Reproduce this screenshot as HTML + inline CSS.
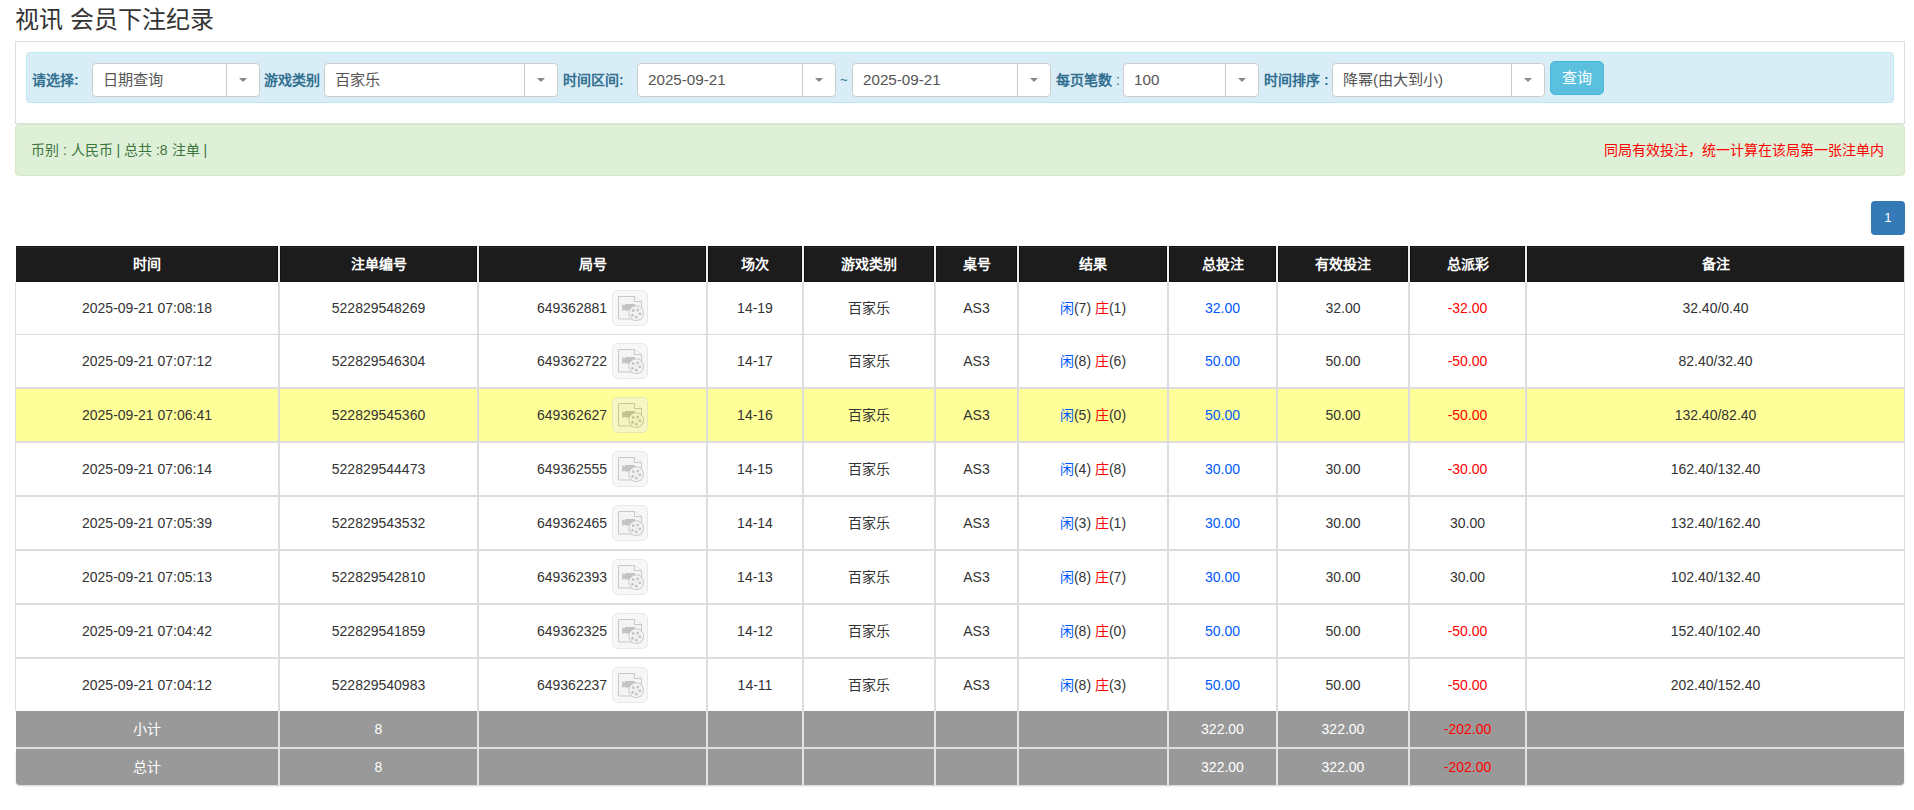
<!DOCTYPE html><html lang="zh-CN"><head><meta charset="utf-8"><style>
*{box-sizing:border-box;margin:0;padding:0}
html,body{width:1914px;height:810px;overflow:hidden;background:#fff}
body{font-family:"Liberation Sans", sans-serif;color:#333;position:relative}
.a{position:absolute;white-space:nowrap}
.t{font-size:14px;line-height:16px;text-align:center}
.sel{position:absolute;top:63px;height:34px;background:#fff;border:1px solid #cdcdcd;border-radius:4px}
.sel .dv{position:absolute;top:0;bottom:0;width:1px;background:#c9c9c9}
.sel .ar{position:absolute;top:14px;width:0;height:0;border-left:4px solid transparent;border-right:4px solid transparent;border-top:4px solid #888}
.sel .tx{position:absolute;left:10px;top:7px;font-size:15.2px;line-height:17px;color:#555;white-space:nowrap}
.lb{position:absolute;top:72px;font-size:14px;line-height:17px;font-weight:bold;color:#31708f;white-space:nowrap}
.vl{position:absolute;width:2px;background:#ddd}
.hl{position:absolute;height:2px;background:#ddd}

</style></head><body>
<div class="a" style="left:15px;top:5px;font-size:24px;line-height:30px;color:#333">视讯 会员下注纪录</div>
<div class="a" style="left:15px;top:41px;width:1890px;height:83px;border:1px solid #ddd;border-bottom-color:#ddd"></div>
<div class="a" style="left:26px;top:52px;width:1868px;height:51px;background:#d9edf7;border:1px solid #bce8f1;border-radius:4px"></div>
<div class="lb" style="left:32px">请选择:</div>
<div class="sel" style="left:92px;width:168px"><div class="tx">日期查询</div><div class="dv" style="left:133px"></div><div class="ar" style="left:146px"></div></div>
<div class="lb" style="left:264px">游戏类别</div>
<div class="sel" style="left:324px;width:234px"><div class="tx">百家乐</div><div class="dv" style="left:199px"></div><div class="ar" style="left:212px"></div></div>
<div class="lb" style="left:563px">时间区间:</div>
<div class="sel" style="left:637px;width:199px"><div class="tx">2025-09-21</div><div class="dv" style="left:164px"></div><div class="ar" style="left:177px"></div></div>
<div class="a" style="left:840px;top:71px;font-size:13.2px;line-height:17px;color:#31708f">~</div>
<div class="sel" style="left:852px;width:199px"><div class="tx">2025-09-21</div><div class="dv" style="left:164px"></div><div class="ar" style="left:177px"></div></div>
<div class="lb" style="left:1056px">每页笔数 <span style="font-weight:normal">:</span></div>
<div class="sel" style="left:1123px;width:136px"><div class="tx">100</div><div class="dv" style="left:101px"></div><div class="ar" style="left:114px"></div></div>
<div class="lb" style="left:1264px">时间排序 :</div>
<div class="sel" style="left:1332px;width:213px"><div class="tx">降幂(由大到小)</div><div class="dv" style="left:178px"></div><div class="ar" style="left:191px"></div></div>
<div class="a" style="left:1550px;top:61px;width:54px;height:34px;background:#5bc0de;border:1px solid #46b8da;border-radius:5px;color:#fff;font-size:15px;line-height:32px;text-align:center">查询</div>
<div class="a" style="left:15px;top:124px;width:1890px;height:52px;background:#dff0d8;border:1px solid #d6e9c6;border-radius:4px"></div>
<div class="a" style="left:31px;top:142px;font-size:14px;line-height:16px;color:#3c763d">币别 : 人民币 | 总共 :8 注单 |</div>
<div class="a" style="right:30px;top:142px;font-size:14px;line-height:16px;color:#f00">同局有效投注，统一计算在该局第一张注单内</div>
<div class="a" style="left:1871px;top:201px;width:34px;height:34px;background:#337ab7;border-radius:4px;color:#fff;font-size:13.2px;line-height:34px;text-align:center">1</div>
<div class="a" style="left:16px;top:246px;width:1888px;height:36px;background:#1c1c1c;border-top:1px solid #141414"></div>
<div class="a" style="left:16px;top:247px;width:1888px;height:1px;background:#282828"></div>
<div class="a" style="left:16px;top:281px;width:1888px;height:1px;background:#141414"></div>
<div class="a t" style="left:16px;width:262px;top:256px;color:#fff;font-weight:bold">时间</div>
<div class="a t" style="left:280px;width:197px;top:256px;color:#fff;font-weight:bold">注单编号</div>
<div class="a t" style="left:479px;width:227px;top:256px;color:#fff;font-weight:bold">局号</div>
<div class="a t" style="left:708px;width:94px;top:256px;color:#fff;font-weight:bold">场次</div>
<div class="a t" style="left:804px;width:130px;top:256px;color:#fff;font-weight:bold">游戏类别</div>
<div class="a t" style="left:936px;width:81px;top:256px;color:#fff;font-weight:bold">桌号</div>
<div class="a t" style="left:1019px;width:148px;top:256px;color:#fff;font-weight:bold">结果</div>
<div class="a t" style="left:1169px;width:107px;top:256px;color:#fff;font-weight:bold">总投注</div>
<div class="a t" style="left:1278px;width:130px;top:256px;color:#fff;font-weight:bold">有效投注</div>
<div class="a t" style="left:1410px;width:115px;top:256px;color:#fff;font-weight:bold">总派彩</div>
<div class="a t" style="left:1527px;width:377px;top:256px;color:#fff;font-weight:bold">备注</div>
<div class="a" style="left:16px;top:282px;width:1888px;height:52px;background:#fff"></div>
<div class="a t" style="left:16px;width:262px;top:300px;color:#333">2025-09-21 07:08:18</div>
<div class="a t" style="left:280px;width:197px;top:300px;color:#333">522829548269</div>
<div class="a t" style="left:479px;width:227px;top:300px">649362881<span style="display:inline-block;width:41px"></span></div>
<div class="a" style="left:612px;top:290px"><svg class="ic" width="36" height="36" viewBox="0 0 36 36" style="opacity:.5"><rect x="0.5" y="0.5" width="35" height="35" rx="5" fill="#f1f1f1" stroke="#d3d3d3"/><path d="M6.5 6.5H22.5L29.5 11.5V29H6.5Z" fill="#ebebeb" stroke="#939393" stroke-width="1"/><path d="M22.5 6.5V11.5H29.5" fill="#f7f7f7" stroke="#939393" stroke-width="1"/><path d="M10.2 14.2L12.9 15.6V14H23V20.4H12.9V19.6L10.2 20.9Z" fill="#898989"/><circle cx="24.2" cy="23.2" r="7.4" fill="#ebebeb" stroke="#939393" stroke-width="1"/><circle cx="21.2" cy="20.6" r="1.5" fill="#8d8d8d"/><circle cx="25.7" cy="19.9" r="1.5" fill="#8d8d8d"/><circle cx="27.9" cy="23.7" r="1.5" fill="#8d8d8d"/><circle cx="20.5" cy="25.3" r="1.5" fill="#8d8d8d"/><circle cx="24.4" cy="27.1" r="1.5" fill="#8d8d8d"/><circle cx="24" cy="23.3" r="0.5" fill="#8d8d8d"/></svg></div>
<div class="a t" style="left:708px;width:94px;top:300px;color:#333">14-19</div>
<div class="a t" style="left:804px;width:130px;top:300px;color:#333">百家乐</div>
<div class="a t" style="left:936px;width:81px;top:300px;color:#333">AS3</div>
<div class="a t" style="left:1019px;width:148px;top:300px"><span style="color:#0059ff">闲</span>(7) <span style="color:#f00">庄</span>(1)</div>
<div class="a t" style="left:1169px;width:107px;top:300px;color:#0059ff">32.00</div>
<div class="a t" style="left:1278px;width:130px;top:300px;color:#333">32.00</div>
<div class="a t" style="left:1410px;width:115px;top:300px;color:#f00">-32.00</div>
<div class="a t" style="left:1527px;width:377px;top:300px;color:#333">32.40/0.40</div>
<div class="a" style="left:16px;top:335px;width:1888px;height:52px;background:#fff"></div>
<div class="a t" style="left:16px;width:262px;top:353px;color:#333">2025-09-21 07:07:12</div>
<div class="a t" style="left:280px;width:197px;top:353px;color:#333">522829546304</div>
<div class="a t" style="left:479px;width:227px;top:353px">649362722<span style="display:inline-block;width:41px"></span></div>
<div class="a" style="left:612px;top:343px"><svg class="ic" width="36" height="36" viewBox="0 0 36 36" style="opacity:.5"><rect x="0.5" y="0.5" width="35" height="35" rx="5" fill="#f1f1f1" stroke="#d3d3d3"/><path d="M6.5 6.5H22.5L29.5 11.5V29H6.5Z" fill="#ebebeb" stroke="#939393" stroke-width="1"/><path d="M22.5 6.5V11.5H29.5" fill="#f7f7f7" stroke="#939393" stroke-width="1"/><path d="M10.2 14.2L12.9 15.6V14H23V20.4H12.9V19.6L10.2 20.9Z" fill="#898989"/><circle cx="24.2" cy="23.2" r="7.4" fill="#ebebeb" stroke="#939393" stroke-width="1"/><circle cx="21.2" cy="20.6" r="1.5" fill="#8d8d8d"/><circle cx="25.7" cy="19.9" r="1.5" fill="#8d8d8d"/><circle cx="27.9" cy="23.7" r="1.5" fill="#8d8d8d"/><circle cx="20.5" cy="25.3" r="1.5" fill="#8d8d8d"/><circle cx="24.4" cy="27.1" r="1.5" fill="#8d8d8d"/><circle cx="24" cy="23.3" r="0.5" fill="#8d8d8d"/></svg></div>
<div class="a t" style="left:708px;width:94px;top:353px;color:#333">14-17</div>
<div class="a t" style="left:804px;width:130px;top:353px;color:#333">百家乐</div>
<div class="a t" style="left:936px;width:81px;top:353px;color:#333">AS3</div>
<div class="a t" style="left:1019px;width:148px;top:353px"><span style="color:#0059ff">闲</span>(8) <span style="color:#f00">庄</span>(6)</div>
<div class="a t" style="left:1169px;width:107px;top:353px;color:#0059ff">50.00</div>
<div class="a t" style="left:1278px;width:130px;top:353px;color:#333">50.00</div>
<div class="a t" style="left:1410px;width:115px;top:353px;color:#f00">-50.00</div>
<div class="a t" style="left:1527px;width:377px;top:353px;color:#333">82.40/32.40</div>
<div class="a" style="left:16px;top:389px;width:1888px;height:52px;background:#ffff99"></div>
<div class="a t" style="left:16px;width:262px;top:407px;color:#333">2025-09-21 07:06:41</div>
<div class="a t" style="left:280px;width:197px;top:407px;color:#333">522829545360</div>
<div class="a t" style="left:479px;width:227px;top:407px">649362627<span style="display:inline-block;width:41px"></span></div>
<div class="a" style="left:612px;top:397px"><svg class="ic" width="36" height="36" viewBox="0 0 36 36" style="opacity:.5"><rect x="0.5" y="0.5" width="35" height="35" rx="5" fill="#f1f1f1" stroke="#d3d3d3"/><path d="M6.5 6.5H22.5L29.5 11.5V29H6.5Z" fill="#ebebeb" stroke="#939393" stroke-width="1"/><path d="M22.5 6.5V11.5H29.5" fill="#f7f7f7" stroke="#939393" stroke-width="1"/><path d="M10.2 14.2L12.9 15.6V14H23V20.4H12.9V19.6L10.2 20.9Z" fill="#898989"/><circle cx="24.2" cy="23.2" r="7.4" fill="#ebebeb" stroke="#939393" stroke-width="1"/><circle cx="21.2" cy="20.6" r="1.5" fill="#8d8d8d"/><circle cx="25.7" cy="19.9" r="1.5" fill="#8d8d8d"/><circle cx="27.9" cy="23.7" r="1.5" fill="#8d8d8d"/><circle cx="20.5" cy="25.3" r="1.5" fill="#8d8d8d"/><circle cx="24.4" cy="27.1" r="1.5" fill="#8d8d8d"/><circle cx="24" cy="23.3" r="0.5" fill="#8d8d8d"/></svg></div>
<div class="a t" style="left:708px;width:94px;top:407px;color:#333">14-16</div>
<div class="a t" style="left:804px;width:130px;top:407px;color:#333">百家乐</div>
<div class="a t" style="left:936px;width:81px;top:407px;color:#333">AS3</div>
<div class="a t" style="left:1019px;width:148px;top:407px"><span style="color:#0059ff">闲</span>(5) <span style="color:#f00">庄</span>(0)</div>
<div class="a t" style="left:1169px;width:107px;top:407px;color:#0059ff">50.00</div>
<div class="a t" style="left:1278px;width:130px;top:407px;color:#333">50.00</div>
<div class="a t" style="left:1410px;width:115px;top:407px;color:#f00">-50.00</div>
<div class="a t" style="left:1527px;width:377px;top:407px;color:#333">132.40/82.40</div>
<div class="a" style="left:16px;top:443px;width:1888px;height:52px;background:#fff"></div>
<div class="a t" style="left:16px;width:262px;top:461px;color:#333">2025-09-21 07:06:14</div>
<div class="a t" style="left:280px;width:197px;top:461px;color:#333">522829544473</div>
<div class="a t" style="left:479px;width:227px;top:461px">649362555<span style="display:inline-block;width:41px"></span></div>
<div class="a" style="left:612px;top:451px"><svg class="ic" width="36" height="36" viewBox="0 0 36 36" style="opacity:.5"><rect x="0.5" y="0.5" width="35" height="35" rx="5" fill="#f1f1f1" stroke="#d3d3d3"/><path d="M6.5 6.5H22.5L29.5 11.5V29H6.5Z" fill="#ebebeb" stroke="#939393" stroke-width="1"/><path d="M22.5 6.5V11.5H29.5" fill="#f7f7f7" stroke="#939393" stroke-width="1"/><path d="M10.2 14.2L12.9 15.6V14H23V20.4H12.9V19.6L10.2 20.9Z" fill="#898989"/><circle cx="24.2" cy="23.2" r="7.4" fill="#ebebeb" stroke="#939393" stroke-width="1"/><circle cx="21.2" cy="20.6" r="1.5" fill="#8d8d8d"/><circle cx="25.7" cy="19.9" r="1.5" fill="#8d8d8d"/><circle cx="27.9" cy="23.7" r="1.5" fill="#8d8d8d"/><circle cx="20.5" cy="25.3" r="1.5" fill="#8d8d8d"/><circle cx="24.4" cy="27.1" r="1.5" fill="#8d8d8d"/><circle cx="24" cy="23.3" r="0.5" fill="#8d8d8d"/></svg></div>
<div class="a t" style="left:708px;width:94px;top:461px;color:#333">14-15</div>
<div class="a t" style="left:804px;width:130px;top:461px;color:#333">百家乐</div>
<div class="a t" style="left:936px;width:81px;top:461px;color:#333">AS3</div>
<div class="a t" style="left:1019px;width:148px;top:461px"><span style="color:#0059ff">闲</span>(4) <span style="color:#f00">庄</span>(8)</div>
<div class="a t" style="left:1169px;width:107px;top:461px;color:#0059ff">30.00</div>
<div class="a t" style="left:1278px;width:130px;top:461px;color:#333">30.00</div>
<div class="a t" style="left:1410px;width:115px;top:461px;color:#f00">-30.00</div>
<div class="a t" style="left:1527px;width:377px;top:461px;color:#333">162.40/132.40</div>
<div class="a" style="left:16px;top:497px;width:1888px;height:52px;background:#fff"></div>
<div class="a t" style="left:16px;width:262px;top:515px;color:#333">2025-09-21 07:05:39</div>
<div class="a t" style="left:280px;width:197px;top:515px;color:#333">522829543532</div>
<div class="a t" style="left:479px;width:227px;top:515px">649362465<span style="display:inline-block;width:41px"></span></div>
<div class="a" style="left:612px;top:505px"><svg class="ic" width="36" height="36" viewBox="0 0 36 36" style="opacity:.5"><rect x="0.5" y="0.5" width="35" height="35" rx="5" fill="#f1f1f1" stroke="#d3d3d3"/><path d="M6.5 6.5H22.5L29.5 11.5V29H6.5Z" fill="#ebebeb" stroke="#939393" stroke-width="1"/><path d="M22.5 6.5V11.5H29.5" fill="#f7f7f7" stroke="#939393" stroke-width="1"/><path d="M10.2 14.2L12.9 15.6V14H23V20.4H12.9V19.6L10.2 20.9Z" fill="#898989"/><circle cx="24.2" cy="23.2" r="7.4" fill="#ebebeb" stroke="#939393" stroke-width="1"/><circle cx="21.2" cy="20.6" r="1.5" fill="#8d8d8d"/><circle cx="25.7" cy="19.9" r="1.5" fill="#8d8d8d"/><circle cx="27.9" cy="23.7" r="1.5" fill="#8d8d8d"/><circle cx="20.5" cy="25.3" r="1.5" fill="#8d8d8d"/><circle cx="24.4" cy="27.1" r="1.5" fill="#8d8d8d"/><circle cx="24" cy="23.3" r="0.5" fill="#8d8d8d"/></svg></div>
<div class="a t" style="left:708px;width:94px;top:515px;color:#333">14-14</div>
<div class="a t" style="left:804px;width:130px;top:515px;color:#333">百家乐</div>
<div class="a t" style="left:936px;width:81px;top:515px;color:#333">AS3</div>
<div class="a t" style="left:1019px;width:148px;top:515px"><span style="color:#0059ff">闲</span>(3) <span style="color:#f00">庄</span>(1)</div>
<div class="a t" style="left:1169px;width:107px;top:515px;color:#0059ff">30.00</div>
<div class="a t" style="left:1278px;width:130px;top:515px;color:#333">30.00</div>
<div class="a t" style="left:1410px;width:115px;top:515px;color:#333">30.00</div>
<div class="a t" style="left:1527px;width:377px;top:515px;color:#333">132.40/162.40</div>
<div class="a" style="left:16px;top:551px;width:1888px;height:52px;background:#fff"></div>
<div class="a t" style="left:16px;width:262px;top:569px;color:#333">2025-09-21 07:05:13</div>
<div class="a t" style="left:280px;width:197px;top:569px;color:#333">522829542810</div>
<div class="a t" style="left:479px;width:227px;top:569px">649362393<span style="display:inline-block;width:41px"></span></div>
<div class="a" style="left:612px;top:559px"><svg class="ic" width="36" height="36" viewBox="0 0 36 36" style="opacity:.5"><rect x="0.5" y="0.5" width="35" height="35" rx="5" fill="#f1f1f1" stroke="#d3d3d3"/><path d="M6.5 6.5H22.5L29.5 11.5V29H6.5Z" fill="#ebebeb" stroke="#939393" stroke-width="1"/><path d="M22.5 6.5V11.5H29.5" fill="#f7f7f7" stroke="#939393" stroke-width="1"/><path d="M10.2 14.2L12.9 15.6V14H23V20.4H12.9V19.6L10.2 20.9Z" fill="#898989"/><circle cx="24.2" cy="23.2" r="7.4" fill="#ebebeb" stroke="#939393" stroke-width="1"/><circle cx="21.2" cy="20.6" r="1.5" fill="#8d8d8d"/><circle cx="25.7" cy="19.9" r="1.5" fill="#8d8d8d"/><circle cx="27.9" cy="23.7" r="1.5" fill="#8d8d8d"/><circle cx="20.5" cy="25.3" r="1.5" fill="#8d8d8d"/><circle cx="24.4" cy="27.1" r="1.5" fill="#8d8d8d"/><circle cx="24" cy="23.3" r="0.5" fill="#8d8d8d"/></svg></div>
<div class="a t" style="left:708px;width:94px;top:569px;color:#333">14-13</div>
<div class="a t" style="left:804px;width:130px;top:569px;color:#333">百家乐</div>
<div class="a t" style="left:936px;width:81px;top:569px;color:#333">AS3</div>
<div class="a t" style="left:1019px;width:148px;top:569px"><span style="color:#0059ff">闲</span>(8) <span style="color:#f00">庄</span>(7)</div>
<div class="a t" style="left:1169px;width:107px;top:569px;color:#0059ff">30.00</div>
<div class="a t" style="left:1278px;width:130px;top:569px;color:#333">30.00</div>
<div class="a t" style="left:1410px;width:115px;top:569px;color:#333">30.00</div>
<div class="a t" style="left:1527px;width:377px;top:569px;color:#333">102.40/132.40</div>
<div class="a" style="left:16px;top:605px;width:1888px;height:52px;background:#fff"></div>
<div class="a t" style="left:16px;width:262px;top:623px;color:#333">2025-09-21 07:04:42</div>
<div class="a t" style="left:280px;width:197px;top:623px;color:#333">522829541859</div>
<div class="a t" style="left:479px;width:227px;top:623px">649362325<span style="display:inline-block;width:41px"></span></div>
<div class="a" style="left:612px;top:613px"><svg class="ic" width="36" height="36" viewBox="0 0 36 36" style="opacity:.5"><rect x="0.5" y="0.5" width="35" height="35" rx="5" fill="#f1f1f1" stroke="#d3d3d3"/><path d="M6.5 6.5H22.5L29.5 11.5V29H6.5Z" fill="#ebebeb" stroke="#939393" stroke-width="1"/><path d="M22.5 6.5V11.5H29.5" fill="#f7f7f7" stroke="#939393" stroke-width="1"/><path d="M10.2 14.2L12.9 15.6V14H23V20.4H12.9V19.6L10.2 20.9Z" fill="#898989"/><circle cx="24.2" cy="23.2" r="7.4" fill="#ebebeb" stroke="#939393" stroke-width="1"/><circle cx="21.2" cy="20.6" r="1.5" fill="#8d8d8d"/><circle cx="25.7" cy="19.9" r="1.5" fill="#8d8d8d"/><circle cx="27.9" cy="23.7" r="1.5" fill="#8d8d8d"/><circle cx="20.5" cy="25.3" r="1.5" fill="#8d8d8d"/><circle cx="24.4" cy="27.1" r="1.5" fill="#8d8d8d"/><circle cx="24" cy="23.3" r="0.5" fill="#8d8d8d"/></svg></div>
<div class="a t" style="left:708px;width:94px;top:623px;color:#333">14-12</div>
<div class="a t" style="left:804px;width:130px;top:623px;color:#333">百家乐</div>
<div class="a t" style="left:936px;width:81px;top:623px;color:#333">AS3</div>
<div class="a t" style="left:1019px;width:148px;top:623px"><span style="color:#0059ff">闲</span>(8) <span style="color:#f00">庄</span>(0)</div>
<div class="a t" style="left:1169px;width:107px;top:623px;color:#0059ff">50.00</div>
<div class="a t" style="left:1278px;width:130px;top:623px;color:#333">50.00</div>
<div class="a t" style="left:1410px;width:115px;top:623px;color:#f00">-50.00</div>
<div class="a t" style="left:1527px;width:377px;top:623px;color:#333">152.40/102.40</div>
<div class="a" style="left:16px;top:659px;width:1888px;height:52px;background:#fff"></div>
<div class="a t" style="left:16px;width:262px;top:677px;color:#333">2025-09-21 07:04:12</div>
<div class="a t" style="left:280px;width:197px;top:677px;color:#333">522829540983</div>
<div class="a t" style="left:479px;width:227px;top:677px">649362237<span style="display:inline-block;width:41px"></span></div>
<div class="a" style="left:612px;top:667px"><svg class="ic" width="36" height="36" viewBox="0 0 36 36" style="opacity:.5"><rect x="0.5" y="0.5" width="35" height="35" rx="5" fill="#f1f1f1" stroke="#d3d3d3"/><path d="M6.5 6.5H22.5L29.5 11.5V29H6.5Z" fill="#ebebeb" stroke="#939393" stroke-width="1"/><path d="M22.5 6.5V11.5H29.5" fill="#f7f7f7" stroke="#939393" stroke-width="1"/><path d="M10.2 14.2L12.9 15.6V14H23V20.4H12.9V19.6L10.2 20.9Z" fill="#898989"/><circle cx="24.2" cy="23.2" r="7.4" fill="#ebebeb" stroke="#939393" stroke-width="1"/><circle cx="21.2" cy="20.6" r="1.5" fill="#8d8d8d"/><circle cx="25.7" cy="19.9" r="1.5" fill="#8d8d8d"/><circle cx="27.9" cy="23.7" r="1.5" fill="#8d8d8d"/><circle cx="20.5" cy="25.3" r="1.5" fill="#8d8d8d"/><circle cx="24.4" cy="27.1" r="1.5" fill="#8d8d8d"/><circle cx="24" cy="23.3" r="0.5" fill="#8d8d8d"/></svg></div>
<div class="a t" style="left:708px;width:94px;top:677px;color:#333">14-11</div>
<div class="a t" style="left:804px;width:130px;top:677px;color:#333">百家乐</div>
<div class="a t" style="left:936px;width:81px;top:677px;color:#333">AS3</div>
<div class="a t" style="left:1019px;width:148px;top:677px"><span style="color:#0059ff">闲</span>(8) <span style="color:#f00">庄</span>(3)</div>
<div class="a t" style="left:1169px;width:107px;top:677px;color:#0059ff">50.00</div>
<div class="a t" style="left:1278px;width:130px;top:677px;color:#333">50.00</div>
<div class="a t" style="left:1410px;width:115px;top:677px;color:#f00">-50.00</div>
<div class="a t" style="left:1527px;width:377px;top:677px;color:#333">202.40/152.40</div>
<div class="a" style="left:16px;top:334px;width:1888px;height:1px;background:#ddd"></div>
<div class="hl" style="left:16px;top:387px;width:1888px"></div>
<div class="hl" style="left:16px;top:441px;width:1888px"></div>
<div class="hl" style="left:16px;top:495px;width:1888px"></div>
<div class="hl" style="left:16px;top:549px;width:1888px"></div>
<div class="hl" style="left:16px;top:603px;width:1888px"></div>
<div class="hl" style="left:16px;top:657px;width:1888px"></div>
<div class="a" style="left:16px;top:711px;width:1888px;height:36px;background:#999;"></div>
<div class="a t" style="left:16px;width:262px;top:721px;color:#fff">小计</div>
<div class="a t" style="left:280px;width:197px;top:721px;color:#fff">8</div>
<div class="a t" style="left:1169px;width:107px;top:721px;color:#fff">322.00</div>
<div class="a t" style="left:1278px;width:130px;top:721px;color:#fff">322.00</div>
<div class="a t" style="left:1410px;width:115px;top:721px;color:#f00">-202.00</div>
<div class="a" style="left:16px;top:749px;width:1888px;height:36px;background:#999;border-radius:0 0 4px 4px;box-shadow:0 1px 2px rgba(0,0,0,.18)"></div>
<div class="a t" style="left:16px;width:262px;top:759px;color:#fff">总计</div>
<div class="a t" style="left:280px;width:197px;top:759px;color:#fff">8</div>
<div class="a t" style="left:1169px;width:107px;top:759px;color:#fff">322.00</div>
<div class="a t" style="left:1278px;width:130px;top:759px;color:#fff">322.00</div>
<div class="a t" style="left:1410px;width:115px;top:759px;color:#f00">-202.00</div>
<div class="hl" style="left:16px;top:747px;width:1888px;background:#e0e0e0"></div>
<div class="a" style="left:15px;top:282px;width:1px;height:429px;background:#ddd"></div>
<div class="a" style="left:1904px;top:246px;width:1px;height:465px;background:#ddd"></div>
<div class="vl" style="left:278px;top:246px;height:36px;background:#efefef"></div>
<div class="a" style="left:277px;top:246px;width:1px;height:36px;background:#121212"></div>
<div class="a" style="left:280px;top:246px;width:1px;height:36px;background:#121212"></div>
<div class="vl" style="left:278px;top:282px;height:429px"></div>
<div class="vl" style="left:278px;top:711px;height:74px;background:#e2e2e2"></div>
<div class="vl" style="left:477px;top:246px;height:36px;background:#efefef"></div>
<div class="a" style="left:476px;top:246px;width:1px;height:36px;background:#121212"></div>
<div class="a" style="left:479px;top:246px;width:1px;height:36px;background:#121212"></div>
<div class="vl" style="left:477px;top:282px;height:429px"></div>
<div class="vl" style="left:477px;top:711px;height:74px;background:#e2e2e2"></div>
<div class="vl" style="left:706px;top:246px;height:36px;background:#efefef"></div>
<div class="a" style="left:705px;top:246px;width:1px;height:36px;background:#121212"></div>
<div class="a" style="left:708px;top:246px;width:1px;height:36px;background:#121212"></div>
<div class="vl" style="left:706px;top:282px;height:429px"></div>
<div class="vl" style="left:706px;top:711px;height:74px;background:#e2e2e2"></div>
<div class="vl" style="left:802px;top:246px;height:36px;background:#efefef"></div>
<div class="a" style="left:801px;top:246px;width:1px;height:36px;background:#121212"></div>
<div class="a" style="left:804px;top:246px;width:1px;height:36px;background:#121212"></div>
<div class="vl" style="left:802px;top:282px;height:429px"></div>
<div class="vl" style="left:802px;top:711px;height:74px;background:#e2e2e2"></div>
<div class="vl" style="left:934px;top:246px;height:36px;background:#efefef"></div>
<div class="a" style="left:933px;top:246px;width:1px;height:36px;background:#121212"></div>
<div class="a" style="left:936px;top:246px;width:1px;height:36px;background:#121212"></div>
<div class="vl" style="left:934px;top:282px;height:429px"></div>
<div class="vl" style="left:934px;top:711px;height:74px;background:#e2e2e2"></div>
<div class="vl" style="left:1017px;top:246px;height:36px;background:#efefef"></div>
<div class="a" style="left:1016px;top:246px;width:1px;height:36px;background:#121212"></div>
<div class="a" style="left:1019px;top:246px;width:1px;height:36px;background:#121212"></div>
<div class="vl" style="left:1017px;top:282px;height:429px"></div>
<div class="vl" style="left:1017px;top:711px;height:74px;background:#e2e2e2"></div>
<div class="vl" style="left:1167px;top:246px;height:36px;background:#efefef"></div>
<div class="a" style="left:1166px;top:246px;width:1px;height:36px;background:#121212"></div>
<div class="a" style="left:1169px;top:246px;width:1px;height:36px;background:#121212"></div>
<div class="vl" style="left:1167px;top:282px;height:429px"></div>
<div class="vl" style="left:1167px;top:711px;height:74px;background:#e2e2e2"></div>
<div class="vl" style="left:1276px;top:246px;height:36px;background:#efefef"></div>
<div class="a" style="left:1275px;top:246px;width:1px;height:36px;background:#121212"></div>
<div class="a" style="left:1278px;top:246px;width:1px;height:36px;background:#121212"></div>
<div class="vl" style="left:1276px;top:282px;height:429px"></div>
<div class="vl" style="left:1276px;top:711px;height:74px;background:#e2e2e2"></div>
<div class="vl" style="left:1408px;top:246px;height:36px;background:#efefef"></div>
<div class="a" style="left:1407px;top:246px;width:1px;height:36px;background:#121212"></div>
<div class="a" style="left:1410px;top:246px;width:1px;height:36px;background:#121212"></div>
<div class="vl" style="left:1408px;top:282px;height:429px"></div>
<div class="vl" style="left:1408px;top:711px;height:74px;background:#e2e2e2"></div>
<div class="vl" style="left:1525px;top:246px;height:36px;background:#efefef"></div>
<div class="a" style="left:1524px;top:246px;width:1px;height:36px;background:#121212"></div>
<div class="a" style="left:1527px;top:246px;width:1px;height:36px;background:#121212"></div>
<div class="vl" style="left:1525px;top:282px;height:429px"></div>
<div class="vl" style="left:1525px;top:711px;height:74px;background:#e2e2e2"></div>
</body></html>
